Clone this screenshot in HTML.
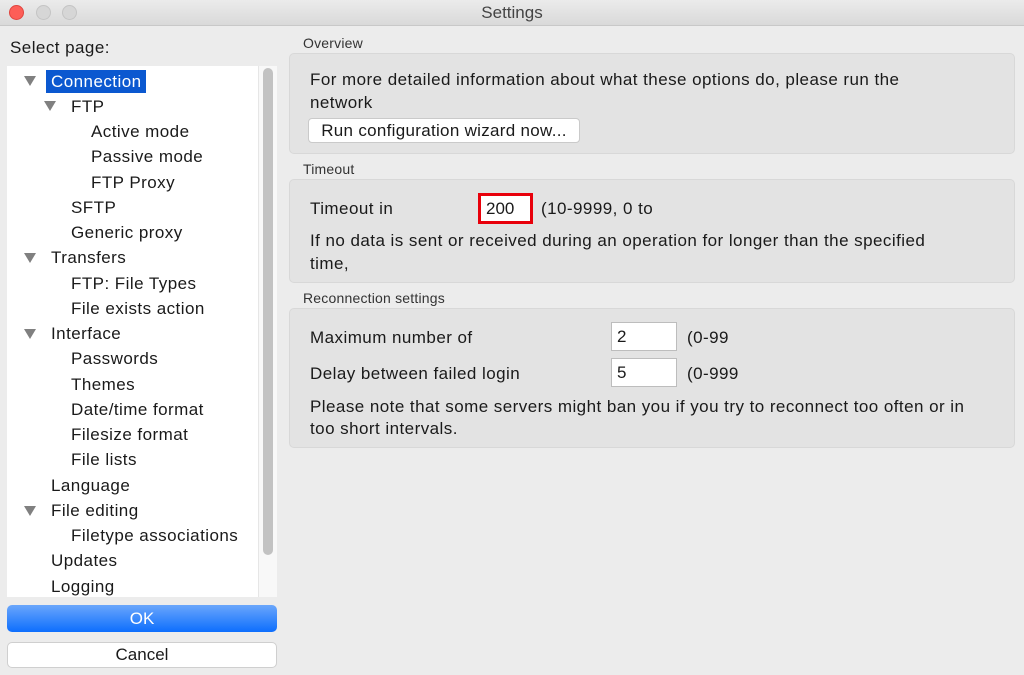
<!DOCTYPE html>
<html><head><style>
*{margin:0;padding:0;box-sizing:border-box}
body{width:1024px;height:675px;background:#ececec;font-family:"Liberation Sans",sans-serif;color:#1a1a1a;position:relative;overflow:hidden}
.abs{position:absolute;white-space:nowrap}
.title{left:0;top:0;width:1024px;height:26px;background:linear-gradient(#ebebeb,#d9d9d9);border-bottom:1px solid #c8c8c8;text-align:center;font-size:17px;line-height:26px;color:#444}
.dot{position:absolute;top:5px;width:15px;height:15px;border-radius:50%;background:#d6d6d6;border:1px solid #c4c4c4}
.tree{left:7px;top:66px;width:251px;height:531px;background:#fff}
.sb{left:258px;top:66px;width:19px;height:531px;background:#f8f8f8;border-left:1px solid #e6e6e6}
.thumb{left:263px;top:68px;width:10px;height:487px;background:#c2c2c2;border-radius:5px}
.t{font-size:17px;letter-spacing:0.45px;position:absolute;white-space:nowrap;line-height:20px}
.tri{position:absolute;width:0;height:0;border-left:6px solid transparent;border-right:6px solid transparent;border-top:10px solid #808080}
.box{position:absolute;left:289px;width:726px;background:#e3e3e3;border:1px solid #d8d8d8;border-radius:5px}
.lab{font-size:14px;color:#333;letter-spacing:0.2px}
.f{font-size:17px;letter-spacing:0.45px}
.inp{position:absolute;background:#fff;border:1px solid #bdbdbd;font-size:17px;padding-left:5px;line-height:28px}
</style></head><body>
<div class="abs title">Settings</div>
<div class="dot" style="left:9px;background:#fd5e57;border-color:#e0443e"></div>
<div class="dot" style="left:36px"></div>
<div class="dot" style="left:62px"></div>
<div class="abs f" style="left:10px;top:38px">Select page:</div>
<div class="abs tree"></div>
<div class="abs sb"></div>
<div class="abs thumb"></div>
<div class="abs" style="left:46px;top:70px;width:100px;height:23px;background:#0b58d0"></div>
<div class="tri" style="left:24px;top:76px"></div>
<div class="t" style="left:51px;top:72px;color:#fff">Connection</div>
<div class="tri" style="left:44px;top:101px"></div>
<div class="t" style="left:71px;top:97px">FTP</div>
<div class="t" style="left:91px;top:122px">Active mode</div>
<div class="t" style="left:91px;top:147px">Passive mode</div>
<div class="t" style="left:91px;top:173px">FTP Proxy</div>
<div class="t" style="left:71px;top:198px">SFTP</div>
<div class="t" style="left:71px;top:223px">Generic proxy</div>
<div class="tri" style="left:24px;top:253px"></div>
<div class="t" style="left:51px;top:248px">Transfers</div>
<div class="t" style="left:71px;top:274px">FTP: File Types</div>
<div class="t" style="left:71px;top:299px">File exists action</div>
<div class="tri" style="left:24px;top:329px"></div>
<div class="t" style="left:51px;top:324px">Interface</div>
<div class="t" style="left:71px;top:349px">Passwords</div>
<div class="t" style="left:71px;top:375px">Themes</div>
<div class="t" style="left:71px;top:400px">Date/time format</div>
<div class="t" style="left:71px;top:425px">Filesize format</div>
<div class="t" style="left:71px;top:450px">File lists</div>
<div class="t" style="left:51px;top:476px">Language</div>
<div class="tri" style="left:24px;top:506px"></div>
<div class="t" style="left:51px;top:501px">File editing</div>
<div class="t" style="left:71px;top:526px">Filetype associations</div>
<div class="t" style="left:51px;top:551px">Updates</div>
<div class="t" style="left:51px;top:577px">Logging</div>
<div class="abs" style="left:7px;top:605px;width:270px;height:27px;border-radius:5px;background:linear-gradient(#6aa6fb,#0d6efd);color:#fff;font-size:17px;text-align:center;line-height:27px">OK</div>
<div class="abs" style="left:7px;top:642px;width:270px;height:26px;border-radius:5px;background:#fff;border:1px solid #cfcfcf;font-size:17px;text-align:center;line-height:24px">Cancel</div>

<div class="abs lab" style="left:303px;top:35px">Overview</div>
<div class="box" style="top:53px;height:101px"></div>
<div class="abs f" style="left:310px;top:70px">For more detailed information about what these options do, please run the</div>
<div class="abs f" style="left:310px;top:93px">network</div>
<div class="abs" style="left:308px;top:118px;width:272px;height:25px;background:#fff;border:1px solid #cacaca;border-radius:4px;font-size:17px;letter-spacing:0.3px;text-align:center;line-height:23px">Run configuration wizard now...</div>

<div class="abs lab" style="left:303px;top:161px">Timeout</div>
<div class="box" style="top:179px;height:104px"></div>
<div class="abs f" style="left:310px;top:199px">Timeout in</div>
<div class="abs" style="left:478px;top:193px;width:55px;height:31px;border:3px solid #e8000b;background:#fff;font-size:17px;line-height:25px;padding-left:5px">200</div>
<div class="abs f" style="left:541px;top:199px">(10-9999, 0 to</div>
<div class="abs f" style="left:310px;top:231px">If no data is sent or received during an operation for longer than the specified</div>
<div class="abs f" style="left:310px;top:254px">time,</div>

<div class="abs lab" style="left:303px;top:290px">Reconnection settings</div>
<div class="box" style="top:308px;height:140px"></div>
<div class="abs f" style="left:310px;top:328px">Maximum number of</div>
<div class="inp" style="left:611px;top:322px;width:66px;height:29px">2</div>
<div class="abs f" style="left:687px;top:328px">(0-99</div>
<div class="abs f" style="left:310px;top:364px">Delay between failed login</div>
<div class="inp" style="left:611px;top:358px;width:66px;height:29px">5</div>
<div class="abs f" style="left:687px;top:364px">(0-999</div>
<div class="abs f" style="left:310px;top:397px">Please note that some servers might ban you if you try to reconnect too often or in</div>
<div class="abs f" style="left:310px;top:419px">too short intervals.</div>
</body></html>
